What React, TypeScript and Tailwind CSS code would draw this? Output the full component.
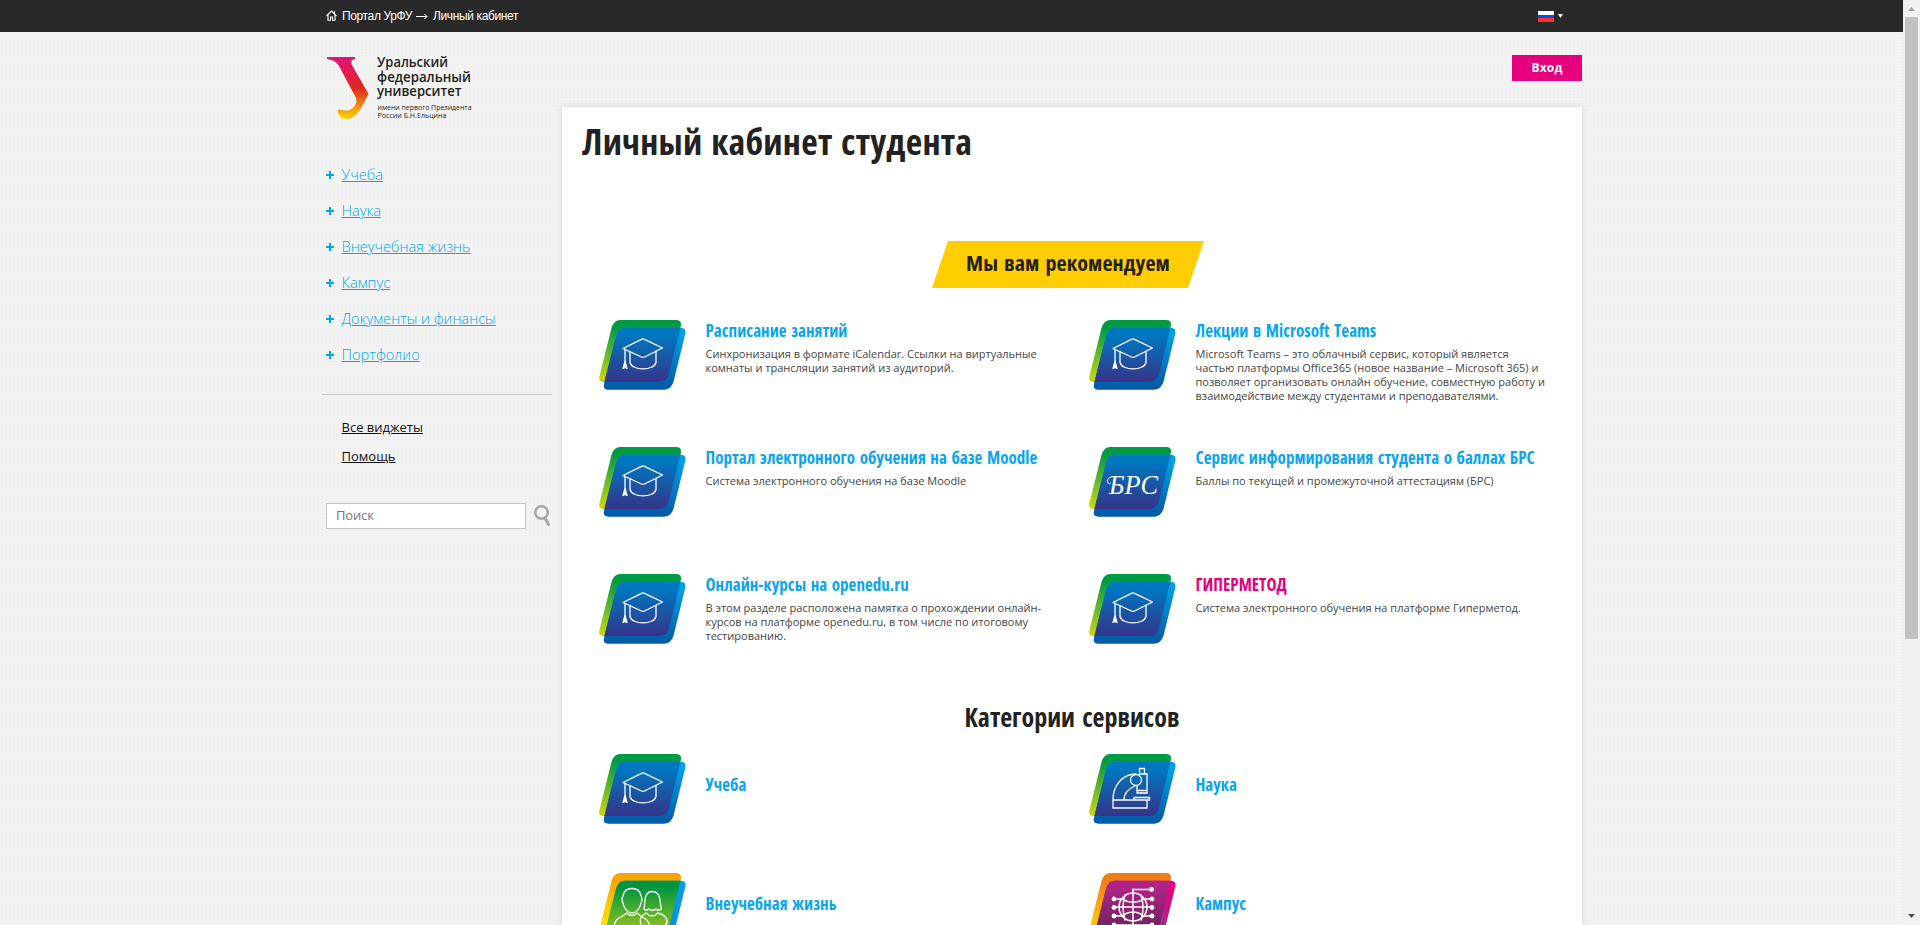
import React from "react";

const condensed = "[font-family:'Open_Sans',sans-serif] font-bold [font-stretch:75%]";
const itemTitle = "text-[17px] tracking-[0.03px] [word-spacing:1.5px]";

const menu = ["Учеба", "Наука", "Внеучебная жизнь", "Кампус", "Документы и финансы", "Портфолио"];

type IconKind = "cap" | "brs" | "microscope" | "people" | "globe";

const palettes: Record<string, { back: [string, string]; front: [string, string]; over: [string, string] }> = {
  blue: { back: ["#009a44", "#c3d50f"], front: ["#009fe3", "#005ca9"], over: ["#0077c0", "#3b2d83"] },
  green: { back: ["#f7a600", "#ffed00"], front: ["#009fe3", "#0090d8"], over: ["#009640", "#b5cc14"] },
  pink: { back: ["#ef7d1a", "#ffd500"], front: ["#e6007e", "#8a3a90"], over: ["#b02386", "#5b2553"] },
};

const BACK = "M21 0H77Q83 0 81.800 6L70 54Q67.500 62 60 62H5Q-1 62 .5 56L12.500 8Q15 0 21 0Z";

function Glyph({ kind }: { kind: IconKind }) {
  const s = { fill: "none", stroke: "#fff", strokeWidth: 1.3, strokeLinejoin: "round" as const, strokeLinecap: "round" as const };
  if (kind === "cap")
    return (
      <g {...s}>
        <path d="M24 28.500L42.500 19.300Q44 18.600 45.500 19.300L63.500 28L45.500 37Q44 37.800 42.500 37Z" />
        <path d="M31 31.500V42.500C33 51 55 51 57 42.500V31.500" />
        <path d="M26 29.500V42" />
        <path d="M26 41.500L24 48.500L26 47.500L28 48.500Z" fill="#fff" />
      </g>
    );
  if (kind === "brs")
    return (
      <g>
        <text x="44.500" y="47" fill="#fff" fontSize="27" fontStyle="italic" textAnchor="middle" textLength="49" lengthAdjust="spacingAndGlyphs" fontFamily="'Liberation Serif', serif">
          БРС
        </text>
        <path d="M25 29.500C20 29.500 17 33 19 36Q20.500 37.500 21.500 36" fill="none" stroke="#fff" />
      </g>
    );
  if (kind === "microscope")
    return (
      <g {...s} strokeLinecap="butt" strokeLinejoin="miter">
        <path d="M24 46H58V54H24ZM24 46C24 31 34 20 47 20M35 46C35 39 39 35 46 32M48 31V39H58V20H54M48 36.500H58M50.500 20V14.500H55.500V20ZM45 43.500H60.500V46H45Z" />
        <circle cx="47" cy="26" r="5.500" />
      </g>
    );
  if (kind === "people")
    return (
      <g {...s}>
        <path d="M36 39Q41 36 42 30Q44 26 42 23Q41 15.500 33 15.500Q25 15.500 24 23Q22 26 24 30Q25 36 30 39Q33 41 36 39Z" />
        <path d="M45 36Q45.500 33 46 27Q47 18.500 53 18.500Q60 18.500 61 27Q61.500 33 62.500 36Q59 38.500 57 36Q53 39 50 36Q47 38.500 45 36Z" />
        <path d="M15 56Q15 46 22 44L28 40Q33 45 38 40L43 44Q51 47 51 56M47 40L43 43Q40 46 42 51M59 40Q67 42 68 48Q68 53 62 54M47 40Q53 46 59 40" />
      </g>
    );
  return (
    <g {...s} strokeWidth={1.5}>
      <circle cx="44" cy="34" r="14" />
      <path d="M44 16V58M25 26H33M55 26H63M25 34H63M25 43H34M54 43H63M44 16.500H62M33 26Q44 33 55 26M33 43Q44 35 55 43M36 22Q32 34 36 47M52 22Q56 34 52 47M25 52H63" />
      <g fill="#fff" stroke="none">
        <circle cx="62.500" cy="16.500" r="2.400" />
        <circle cx="25" cy="26" r="2.400" /><circle cx="63" cy="26" r="2.400" />
        <circle cx="25" cy="34.500" r="2.400" /><circle cx="63" cy="34.500" r="2.400" />
        <circle cx="25" cy="43" r="2.400" /><circle cx="63" cy="43" r="2.400" />
        <circle cx="25" cy="52" r="2.400" /><circle cx="63" cy="52" r="2.400" />
      </g>
    </g>
  );
}

function Tile({ id, kind, palette = "blue" }: { id: string; kind: IconKind; palette?: string }) {
  const p = palettes[palette];
  const grad = (name: string, c: [string, string]) => (
    <linearGradient id={`${id}-${name}`} x1="0" y1="0" x2="0" y2="1">
      <stop offset="0.12" stopColor={c[0]} />
      <stop offset="0.95" stopColor={c[1]} />
    </linearGradient>
  );
  return (
    <svg width="88" height="71" viewBox="0 0 88 71" className="shrink-0">
      <defs>
        {grad("b", p.back)}
        {grad("f", p.front)}
        {grad("o", p.over)}
        <clipPath id={`${id}-c`}><path d={BACK} /></clipPath>
      </defs>
      <path d={BACK} fill={`url(#${id}-b)`} />
      <path d={BACK} transform="translate(4.500 7.700)" fill={`url(#${id}-f)`} />
      <g clipPath={`url(#${id}-c)`}>
        <path d={BACK} transform="translate(4.500 7.700)" fill={`url(#${id}-o)`} />
      </g>
      <Glyph kind={kind} />
    </svg>
  );
}

const services: { t: string; d: string[]; k: IconKind; c?: string }[] = [
  { t: "Расписание занятий", d: ["Синхронизация в формате iCalendar. Ссылки на виртуальные", "комнаты и трансляции занятий из аудиторий."], k: "cap" },
  { t: "Лекции в Microsoft Teams", d: ["Microsoft Teams – это облачный сервис, который является", "частью платформы Office365 (новое название – Microsoft 365) и", "позволяет организовать онлайн обучение, совместную работу и", "взаимодействие между студентами и преподавателями."], k: "cap" },
  { t: "Портал электронного обучения на базе Moodle", d: ["Система электронного обучения на базе Moodle"], k: "cap" },
  { t: "Сервис информирования студента о баллах БРС", d: ["Баллы по текущей и промежуточной аттестациям (БРС)"], k: "brs" },
  { t: "Онлайн-курсы на openedu.ru", d: ["В этом разделе расположена памятка о прохождении онлайн-", "курсов на платформе openedu.ru, в том числе по итоговому", "тестированию."], k: "cap" },
  { t: "ГИПЕРМЕТОД", d: ["Система электронного обучения на платформе Гиперметод."], k: "cap", c: "text-[#e6007e]" },
];

const categories: { t: string; k: IconKind; p?: string }[] = [
  { t: "Учеба", k: "cap" },
  { t: "Наука", k: "microscope" },
  { t: "Внеучебная жизнь", k: "people", p: "green" },
  { t: "Кампус", k: "globe", p: "pink" },
];

function Logo() {
  return (
    <svg width="150" height="68" viewBox="0 0 150 68" className="overflow-visible">
      <defs>
        <linearGradient id="logo" x1="0" y1="0" x2="0" y2="1">
          <stop offset="0" stopColor="#e2127b" />
          <stop offset="0.5" stopColor="#e0261f" />
          <stop offset="0.75" stopColor="#ee7d12" />
          <stop offset="1" stopColor="#ffd800" />
        </linearGradient>
      </defs>
      <path d="M1 1H29V3C24 4 25 7 26.500 10L42.500 38C37 48 32 62 22 63C15 63.500 11 58 12 54C14 52.500 17 55 21 54.500C27 54 32 48 30 42L13 10C10 5 6 4 1 3Z" fill="url(#logo)" />
      <g fill="#1d1d1b" fontFamily="'Open Sans', sans-serif">
        <g fontSize="14.500" fontWeight="600" className="[font-stretch:88%]">
          <text x="51" y="11" textLength="71" lengthAdjust="spacingAndGlyphs">Уральский</text>
          <text x="51" y="25.500" textLength="94" lengthAdjust="spacingAndGlyphs">федеральный</text>
          <text x="51" y="40" textLength="84.500" lengthAdjust="spacingAndGlyphs">университет</text>
        </g>
        <g fontSize="8">
          <text x="51.500" y="53.500" textLength="94" lengthAdjust="spacingAndGlyphs">имени первого Президента</text>
          <text x="51.500" y="62" textLength="69" lengthAdjust="spacingAndGlyphs">России Б.Н.Ельцина</text>
        </g>
      </g>
    </svg>
  );
}

export default function App() {
  return (
    <div className="flex h-[925px] w-[1920px] overflow-hidden bg-[#f3f3f3] [font-family:'Open_Sans',sans-serif]">
      <div className="flex w-[1903px] flex-col bg-[radial-gradient(circle,#ededed_0.7px,transparent_1px)] bg-[length:4px_3px]">
        <header className="h-8 shrink-0 bg-[#292929] pl-[326px]">
          <div className="flex h-8 w-[1256px] items-center text-xs tracking-[-0.37px] text-white [font-family:'Liberation_Sans',sans-serif]">
            <svg className="-mt-0.5" width="11" height="11" viewBox="0 0 11 11" fill="none" stroke="#fff" strokeWidth="1.100">
              <path d="M.5 6L5.500 1L10.500 6M2 5V10.300H4.500V7H6.500V10.300H9V5M8.500 3.500V1" />
            </svg>
            <span className="ml-[5px]">Портал УрФУ</span>
            <svg className="mr-[5px] ml-1" width="12" height="6" viewBox="0 0 12 6" fill="none" stroke="#fff"><path d="M0 3.500H11M8.500 1L11 3.500L8.500 6" /></svg>
            <span>Личный кабинет</span>
            <div className="mr-[19px] ml-auto flex items-center gap-1">
              <div className="flex w-4 flex-col">
                <i className="h-1 bg-white" /><i className="h-[3px] bg-[#0052d4]" /><i className="h-1 bg-[#ff3333]" />
              </div>
              <svg width="5" height="4" viewBox="0 0 5 4"><path d="M0 0H5L2.500 4Z" fill="#fff" /></svg>
            </div>
          </div>
        </header>
        <div className="flex min-h-0 flex-1 pl-[322px]">
          <aside className="w-[240px] shrink-0 pt-6">
            <div className="ml-1 h-[68px]"><Logo /></div>
            <nav className="mt-[33px] ml-1 flex flex-col">
              {menu.map((m) => (
                <a key={m} className="flex h-9 items-center gap-[7.500px] text-[14.700px] font-light text-[#00a8f0]">
                  <svg width="8" height="8" viewBox="0 0 8 8" fill="#00a8f0"><path d="M3 0H5V3H8V5H5V8H3V5H0V3H3Z" /></svg>
                  <span className="-mt-px underline">{m}</span>
                </a>
              ))}
            </nav>
            <div className="mt-[21px] h-px w-[230px] bg-[#c6c6c6]" />
            <div className="mt-[18px] ml-[19.500px] flex flex-col text-[13px] text-[#111]">
              <a className="flex h-[29px] items-center underline">Все виджеты</a>
              <a className="flex h-[29px] items-center underline">Помощь</a>
            </div>
            <div className="mt-8 ml-1 flex items-start gap-2">
              <div className="flex h-[26px] w-[200px] items-center border border-[#c6c6c6] bg-white pl-[9px] text-[13px] tracking-[-0.15px] text-[#757575]">Поиск</div>
              <svg className="mt-[2px]" width="17" height="21" viewBox="0 0 17 21" fill="none" stroke="#a6a6a6"><circle cx="7.500" cy="7.500" r="6.300" strokeWidth="2.400" /><path d="M11 13L14.500 19.500" strokeWidth="3" strokeLinecap="round" /></svg>
            </div>
          </aside>
          <div className="flex w-[1020px] flex-col">
            <div className="flex h-[75px] shrink-0 justify-end pt-[23px]">
              <button className="h-[26px] w-[70px] bg-[#e6007e] pb-px text-[12px] font-bold tracking-[0.15px] text-white">Вход</button>
            </div>
            <main className="flex-1 overflow-hidden bg-white shadow-[0_0_6px_rgba(0,0,0,0.14)]">
              <h1 className={`${condensed} mt-[10px] ml-5 h-[50px] text-[36px] leading-[50px] tracking-[0.22px] whitespace-nowrap text-[#222] [word-spacing:2px]`}>Личный кабинет студента</h1>
              <div className="mt-[74px] ml-[370px] flex h-[47px] w-[272px] items-center justify-center bg-[#ffcd00] pb-[4px] [clip-path:polygon(16px_0,100%_0,256px_100%,0_100%)]">
                <span className={`${condensed} text-[22px] tracking-[0.1px] whitespace-nowrap text-[#222] [word-spacing:2px]`}>Мы вам рекомендуем</span>
              </div>
              <div className="mt-8 ml-[37px] grid grid-cols-[490px_490px]">
                {services.map((s, i) => (
                  <div key={s.t} className="flex h-[127px]">
                    <Tile id={`s${i}`} kind={s.k} />
                    <div className="-mt-px ml-[18.500px]">
                      <h3 className={`${condensed} ${itemTitle} h-[23px] leading-[23px] whitespace-nowrap ${s.c ?? "text-[#0aa5ed]"}`}>{s.t}</h3>
                      <p className="mt-[5px] text-[11px] leading-[14px] text-[#444]">
                        {s.d.map((l) => <span key={l} className="block whitespace-nowrap">{l}</span>)}
                      </p>
                    </div>
                  </div>
                ))}
              </div>
              <h2 className={`${condensed} -mt-0.5 h-[38px] text-center text-[26px] leading-[36px] text-[#222] [word-spacing:2.5px]`}>Категории сервисов</h2>
              <div className="mt-[17px] ml-[37px] grid grid-cols-[490px_490px]">
                {categories.map((s, i) => (
                  <div key={s.t} className="flex h-[119px]">
                    <Tile id={`c${i}`} kind={s.k} palette={s.p} />
                    <h3 className={`${condensed} ${itemTitle} mt-[19px] ml-[18.500px] h-[23px] leading-[23px] whitespace-nowrap text-[#0aa5ed]`}>{s.t}</h3>
                  </div>
                ))}
              </div>
            </main>
          </div>
        </div>
      </div>
      <div className="flex w-[17px] flex-col items-center bg-[#f1f1f1]">
        <svg width="17" height="17" viewBox="0 0 17 17"><path d="M5 11H12L8.500 7Z" fill="#a3a3a3" /></svg>
        <div className="h-[622px] w-[13px] bg-[#c1c1c1]" />
        <svg className="mt-auto" width="17" height="17" viewBox="0 0 17 17"><path d="M5 6H12L8.500 10Z" fill="#505050" /></svg>
      </div>
    </div>
  );
}
